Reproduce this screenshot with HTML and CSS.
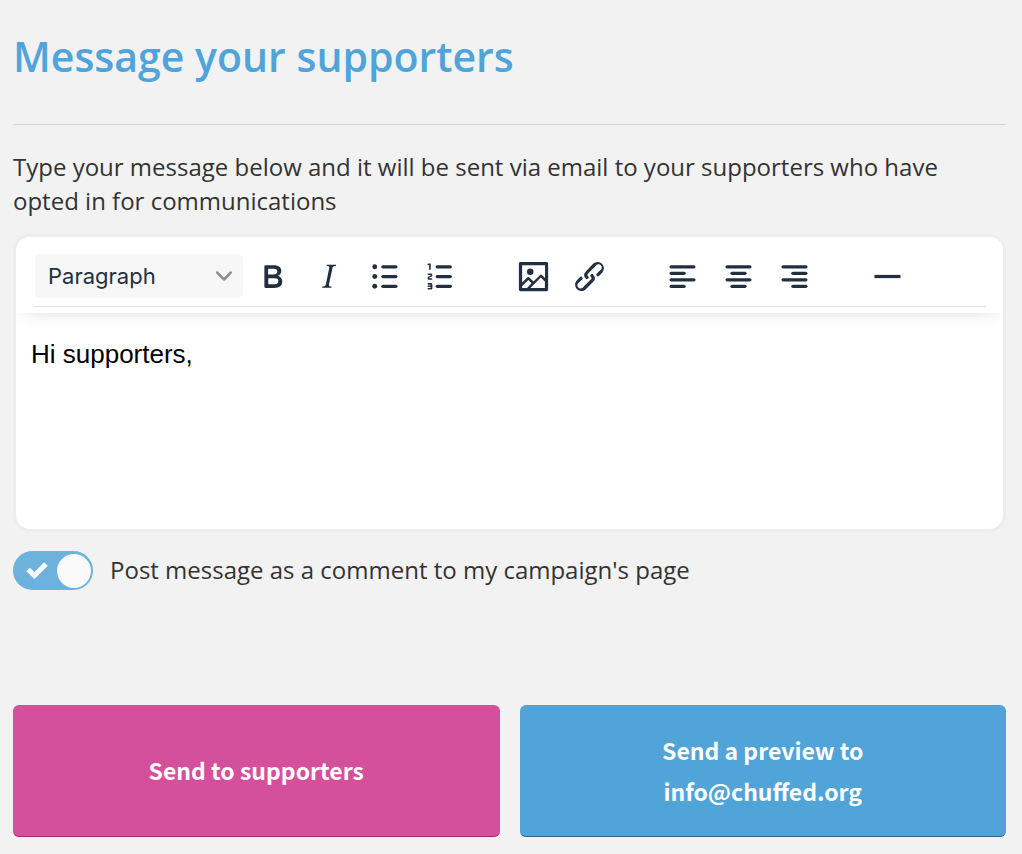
FILE: index.html
```html
<!DOCTYPE html>
<html lang="en">
<head>
<meta charset="utf-8">
<meta name="viewport" content="width=device-width, initial-scale=1">
<title>Message your supporters</title>
<link rel="stylesheet" href="styles.css">
</head>
<body>
<main class="page">
  <h1 class="title">Message your supporters</h1>
  <form class="form">
    <p class="intro" id="intro">Type your message below and it will be sent via email to your supporters who have opted in for communications</p>

    <div class="editor">
      <div class="toolbar" role="toolbar" aria-label="Formatting">
        <div class="tools">
          <div class="format">
            <select class="format-select" aria-label="Block format">
              <option>Paragraph</option>
            </select>
            <svg class="format-arrow" viewBox="0 0 10 10" aria-hidden="true"><path d="M8.7 2.2c.3-.3.8-.3 1 0 .4.4.4.9 0 1.2L5.7 7.8c-.3.3-.9.3-1.2 0L.2 3.4a.8.8 0 0 1 0-1.2c.3-.3.8-.3 1.1 0L5 6l3.7-3.8z"/></svg>
          </div>
          <div class="group">
            <button class="tool" type="button" aria-label="Bold"><svg class="icon" viewBox="0 0 24 24"><path fill-rule="evenodd" d="M7.8 19c-.3 0-.5 0-.6-.2l-.2-.5V5.7c0-.2 0-.4.2-.5l.6-.2h5c1.5 0 2.7.3 3.5 1 .7.6 1.1 1.4 1.1 2.5a3 3 0 0 1-.6 1.9c-.4.6-1 1-1.6 1.2.4.1.9.3 1.3.6s.8.7 1 1.2c.4.4.5 1 .5 1.6 0 1.3-.4 2.3-1.3 3-.8.7-2.1 1-3.8 1H7.8zm5-8.3c.6 0 1.2-.1 1.6-.5.4-.3.6-.7.6-1.3 0-1.1-.8-1.7-2.3-1.7H9.3v3.5h3.4zm.5 6c.7 0 1.3-.1 1.7-.4.4-.4.6-.9.6-1.5s-.2-1-.7-1.4c-.4-.3-1-.4-2-.4H9.4v3.8h4z"/></svg></button>
            <button class="tool" type="button" aria-label="Italic"><svg class="icon" viewBox="0 0 24 24"><path d="M16.7 4.7l-.1.9h-.3c-.6 0-1 0-1.4.3-.3.3-.4.6-.5 1.1l-2.1 9.8v.6c0 .5.4.8 1.4.8h.2l-.2.8H8l.2-.8h.2c1.1 0 1.8-.5 2-1.5l2-9.8.1-.5c0-.6-.4-.8-1.4-.8h-.3l.2-.9h5.8z"/></svg></button>
            <button class="tool" type="button" aria-label="Bullet list"><svg class="icon" viewBox="0 0 24 24"><rect x="10" y="5" width="10" height="2" rx="1"/><rect x="10" y="11" width="10" height="2" rx="1"/><rect x="10" y="17" width="10" height="2" rx="1"/><circle cx="6" cy="6" r="1.5"/><circle cx="6" cy="12" r="1.5"/><circle cx="6" cy="18" r="1.5"/></svg></button>
            <button class="tool" type="button" aria-label="Numbered list"><svg class="icon" viewBox="0 0 24 24"><rect x="9" y="5" width="10" height="2" rx="1"/><rect x="9" y="11" width="10" height="2" rx="1"/><rect x="9" y="17" width="10" height="2" rx="1"/><path d="M6 4v3.5c0 .3-.2.5-.5.5a.5.5 0 0 1-.5-.5V5h-.5a.5.5 0 0 1 0-1H6zm-1 8.8l.2.2h1.3c.3 0 .5.2.5.5s-.2.5-.5.5H4.9a1 1 0 0 1-.9-1V13c0-.4.3-.8.6-1l1.2-.4.2-.3a.2.2 0 0 0-.2-.2H4.5a.5.5 0 0 1-.5-.5c0-.3.2-.5.5-.5h1.6c.5 0 .9.4.9 1v.1c0 .4-.3.8-.6 1l-1.2.4-.2.3zM7 17v2c0 .6-.4 1-1 1H4.500a.5.5 0 0 1 0-1h1.2c.2 0 .3-.1.3-.3 0-.2-.1-.3-.3-.3H4.4a.4.4 0 1 1 0-.8h1.3c.2 0 .3-.1.3-.3 0-.2-.1-.3-.3-.3H4.5a.5.5 0 1 1 0-1H6c.6 0 1 .4 1 1z"/></svg></button>
          </div>
          <div class="group">
            <button class="tool" type="button" aria-label="Insert image"><svg class="icon" viewBox="0 0 24 24"><path fill-rule="evenodd" d="M5 15.7l3.3-3.2c.3-.3.7-.3 1 0L12 15l4.1-4c.3-.4.8-.4 1 0l2 1.9V5H5v10.7zM5 18V19h3l2.8-2.9-2-2L5 17.9zm14-3l-2.5-2.4-6.4 6.5H19v-4zM4 3h16c.6 0 1 .4 1 1v16c0 .6-.4 1-1 1H4a1 1 0 0 1-1-1V4c0-.6.4-1 1-1zm6 8a2 2 0 1 0 0-4 2 2 0 0 0 0 4z"/></svg></button>
            <button class="tool" type="button" aria-label="Insert link"><svg class="icon" viewBox="0 0 24 24"><path d="M6.2 12.3a1 1 0 0 1 1.4 1.4l-2.1 2a2 2 0 1 0 2.7 2.8l4.8-4.8a1 1 0 0 0 0-1.4 1 1 0 1 1 1.4-1.3 2.9 2.9 0 0 1 0 4L9.6 20a3.9 3.9 0 0 1-5.5-5.5l2-2zm11.6-.6a1 1 0 0 1-1.4-1.4l2-2a2 2 0 1 0-2.6-2.8L11 10.3a1 1 0 0 0 0 1.4A1 1 0 1 1 9.6 13a2.9 2.9 0 0 1 0-4L14.4 4a3.9 3.9 0 0 1 5.5 5.5l-2 2z"/></svg></button>
          </div>
          <div class="group">
            <button class="tool" type="button" aria-label="Align left"><svg class="icon" viewBox="0 0 24 24"><rect x="4" y="5" width="16" height="2" rx="1"/><rect x="4" y="9" width="10" height="2" rx="1"/><rect x="4" y="13" width="16" height="2" rx="1"/><rect x="4" y="17" width="10" height="2" rx="1"/></svg></button>
            <button class="tool" type="button" aria-label="Align center"><svg class="icon" viewBox="0 0 24 24"><rect x="4" y="5" width="16" height="2" rx="1"/><rect x="7" y="9" width="10" height="2" rx="1"/><rect x="4" y="13" width="16" height="2" rx="1"/><rect x="7" y="17" width="10" height="2" rx="1"/></svg></button>
            <button class="tool" type="button" aria-label="Align right"><svg class="icon" viewBox="0 0 24 24"><rect x="4" y="5" width="16" height="2" rx="1"/><rect x="10" y="9" width="10" height="2" rx="1"/><rect x="4" y="13" width="16" height="2" rx="1"/><rect x="10" y="17" width="10" height="2" rx="1"/></svg></button>
          </div>
          <div class="group">
            <button class="tool" type="button" aria-label="Horizontal line"><svg class="icon" viewBox="0 0 24 24"><path d="M4 11h16v2H4z"/></svg></button>
          </div>
        </div>
      </div>
      <textarea class="message" aria-label="Message" aria-describedby="intro">Hi supporters,</textarea>
    </div>

    <label class="post">
      <span class="switch">
        <input class="switch-input" type="checkbox" checked>
        <svg class="switch-check" viewBox="0 0 22 18" aria-hidden="true"><path d="M2 8.500l6.500 6L20 3" fill="none" stroke="#fff" stroke-width="5"/></svg>
      </span>
      <span class="post-text">Post message as a comment to my campaign's page</span>
    </label>

    <div class="actions">
      <button class="action action-send" type="submit">Send to supporters</button>
      <button class="action action-preview" type="button">Send a preview to<br>info@chuffed.org</button>
    </div>
  </form>
</main>
</body>
</html>
```
FILE: styles.css
```css
* {
  box-sizing: border-box;
}

body {
  margin: 0;
  background: #f2f2f2;
  color: #333;
  font-family: "Open Sans", "Noto Sans", sans-serif;
  font-size: 24px;
  line-height: 34px;
}

.page {
  padding: 26px 16px 17px 13px;
}

.title {
  margin: 0 0 25px;
  padding-bottom: 38px;
  border-bottom: 1px solid #d6d6d6;
  color: #50a4da;
  font-size: 41px;
  font-weight: 600;
  line-height: 60px;
}

.intro {
  margin: 0 0 16px;
}

.editor {
  overflow: hidden;
  border: 3px solid #ededed;
  border-radius: 17px;
  background: #fff;
}

.toolbar {
  position: relative;
  padding: 9px 17px 6px 18px;
  background: #fff;
  box-shadow: 0 4px 20px -8px rgba(0, 0, 0, 0.2);
}

.tools {
  display: flex;
  flex-wrap: wrap;
  align-items: center;
  column-gap: 37px;
  padding: 0 1px;
  border-bottom: 1px solid #e0e0e0;
}

.format {
  position: relative;
  width: 208px;
  margin-right: -36px;
}

.format-select {
  display: block;
  width: 100%;
  height: 44px;
  padding: 0 40px 0 13px;
  border: 0;
  border-radius: 5px;
  appearance: none;
  background: #f7f7f7;
  color: #222f3e;
  font-family: Inter, sans-serif;
  font-size: 22px;
}

.format-arrow {
  position: absolute;
  top: 14px;
  right: 11px;
  width: 16px;
  height: 16px;
  fill: #8c9196;
  pointer-events: none;
}

.group {
  display: flex;
}

.tool {
  display: flex;
  align-items: center;
  justify-content: center;
  width: 56px;
  height: 60px;
  padding: 0;
  border: 0;
  background: none;
}

.icon {
  width: 39px;
  height: 39px;
  fill: #222f3e;
}

.message {
  display: block;
  width: 100%;
  height: 216px;
  padding: 25px 15px;
  border: 0;
  outline: 0;
  resize: none;
  background: transparent;
  color: #000;
  font-family: "Liberation Sans", Arial, sans-serif;
  font-size: 26px;
  line-height: 32px;
}

.post {
  display: flex;
  align-items: center;
  gap: 17px;
  margin-top: 19px;
}

.post-text {
  padding-bottom: 2px;
  font-weight: 500;
}

.switch {
  position: relative;
  flex: none;
}

.switch-input {
  display: flex;
  align-items: center;
  width: 80px;
  height: 39px;
  margin: 0;
  padding: 2px;
  border-radius: 20px;
  appearance: none;
  background: #bbb;
}

.switch-input:checked {
  justify-content: flex-end;
  background: #6db2dc;
}

.switch-input::after {
  width: 34px;
  height: 34px;
  border-radius: 50%;
  background: #fafafa;
  content: "";
}

.switch-check {
  position: absolute;
  top: 10px;
  left: 13px;
  width: 22px;
  height: 18px;
}

.actions {
  display: grid;
  grid-template-columns: 1fr 1fr;
  gap: 20px;
  margin-top: 115px;
}

.action {
  min-height: 132px;
  padding: 24px;
  border: 0;
  border-bottom: 1px solid;
  border-radius: 6px;
  color: #fff;
  font-family: "Noto Sans CJK SC", "Noto Sans", sans-serif;
  font-size: 23px;
  font-weight: 700;
  line-height: 41px;
}

.action-send {
  border-color: #9c2c6c;
  background: #d5509c;
}

.action-preview {
  border-color: #2b6488;
  background: #50a4d8;
}
```
